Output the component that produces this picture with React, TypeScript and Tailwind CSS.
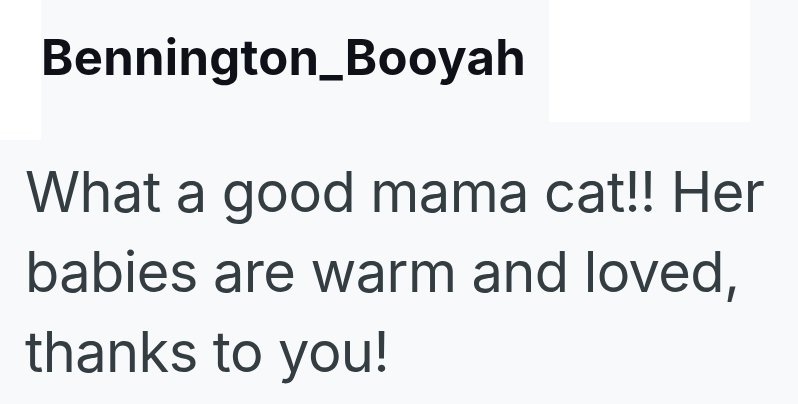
export default function App() {
  return (
    <div className="w-[798px] h-[404px] bg-[#f8f9fb] overflow-hidden font-['Inter',sans-serif]">
      {/* Header row */}
      <div className="flex h-[140px]">
        <div className="w-[41px] h-[140px] bg-white" />
        <div className="flex-1 h-[122px] pt-[28px]">
          <p className="text-[49px] leading-[60px] font-bold text-[#0f1118] tracking-[0.3px]">Bennington_Booyah</p>
        </div>
        <div className="w-[201px] h-[122px] bg-white" />
        <div className="w-[48px]" />
      </div>
      {/* Comment */}
      <p className="pl-[25px] pr-[20px] mt-[12px] text-[56px] leading-[80px] tracking-[-0.6px] text-[#333d42]">
        What a good mama cat!! Her babies are warm and loved, thanks to you!
      </p>
    </div>
  );
}
